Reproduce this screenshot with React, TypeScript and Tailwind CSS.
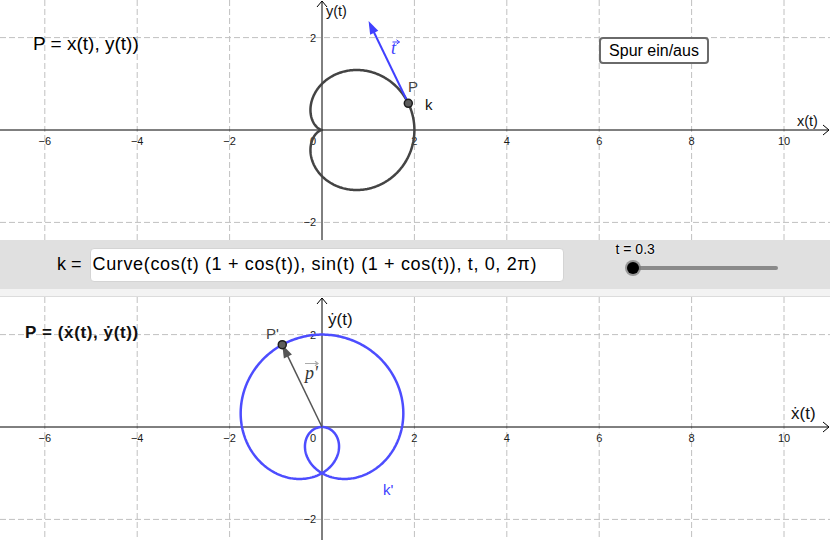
import React from 'react';

const SCALE = 46.2;
const OX = 322;
const OY = 130;
const T0 = 0.3;

const sx = (x: number) => OX + x * SCALE;
const sy = (y: number) => OY - y * SCALE;

const FONT = '"Liberation Sans", Arial, sans-serif';
const SERIF = '"Liberation Serif", "Times New Roman", serif';

type Fn = (t: number) => [number, number];

const k: Fn = (t) => [Math.cos(t) * (1 + Math.cos(t)), Math.sin(t) * (1 + Math.cos(t))];
const kd: Fn = (t) => [-Math.sin(t) - Math.sin(2 * t), Math.cos(t) + Math.cos(2 * t)];

function curvePath(fn: Fn) {
  let d = '';
  const n = 480;
  for (let i = 0; i <= n; i++) {
    const [x, y] = fn((2 * Math.PI * i) / n);
    d += (i === 0 ? 'M' : 'L') + sx(x).toFixed(2) + ' ' + sy(y).toFixed(2) + ' ';
  }
  return d;
}

// line with a filled arrow head at (x2, y2)
function Vector({ x1, y1, x2, y2, color, width }: { x1: number; y1: number; x2: number; y2: number; color: string; width: number }) {
  const len = Math.hypot(x2 - x1, y2 - y1);
  const ux = (x2 - x1) / len;
  const uy = (y2 - y1) / len;
  const hl = 13;
  const hw = 4.5;
  const bx = x2 - ux * hl;
  const by = y2 - uy * hl;
  const pts = `${x2},${y2} ${bx - uy * hw},${by + ux * hw} ${bx + uy * hw},${by - ux * hw}`;
  return (
    <g>
      <line x1={x1} y1={y1} x2={bx + ux * 2} y2={by + uy * 2} stroke={color} strokeWidth={width} />
      <polygon points={pts} fill={color} />
    </g>
  );
}

function Grid({ height }: { height: number }) {
  const xs = [-6, -4, -2, 2, 4, 6, 8, 10];
  return (
    <g>
      {xs.map((v) => (
        <line key={v} x1={sx(v)} y1={0} x2={sx(v)} y2={height} stroke="#c0c0c0" strokeDasharray="6 3" />
      ))}
      {[2, -2].map((v) => (
        <line key={v} x1={0} y1={sy(v)} x2={830} y2={sy(v)} stroke="#c0c0c0" strokeDasharray="6 3" />
      ))}
      <line x1={0} y1={OY} x2={829} y2={OY} stroke="#000" strokeWidth={1} />
      <line x1={OX} y1={1} x2={OX} y2={height} stroke="#000" strokeWidth={1} />
      <path d={`M823 ${OY - 5} L829 ${OY} L823 ${OY + 5}`} fill="none" stroke="#000" />
      <path d={`M${OX - 5} 7 L${OX} 1 L${OX + 5} 7`} fill="none" stroke="#000" />
      <g fontFamily={FONT} fontSize={11} fill="#1a1a1a">
        {xs.map((v) => (
          <text key={v} x={sx(v)} y={OY + 15} textAnchor="middle">
            {v < 0 ? '\u2212' + -v : v}
          </text>
        ))}
        <text x={OX - 9} y={OY + 15} textAnchor="middle">0</text>
        <text x={OX - 6} y={sy(2) + 4} textAnchor="end">2</text>
        <text x={OX - 6} y={sy(-2) + 4} textAnchor="end">{'\u22122'}</text>
      </g>
    </g>
  );
}

function TopGraph() {
  const [px, py] = k(T0);
  const [dx, dy] = kd(T0);
  const P = { x: sx(px), y: sy(py) };
  return (
    <div className="relative h-[240px] shrink-0">
      <svg width={830} height={240} className="block">
        <Grid height={240} />
        <path d={curvePath(k)} fill="none" stroke="#444" strokeWidth={2.5} />
        <Vector x1={P.x} y1={P.y} x2={sx(px + dx)} y2={sy(py + dy)} color="#4040ff" width={2} />
        <circle cx={P.x} cy={P.y} r={4} fill="#5c5c5c" stroke="#1c1c1c" strokeWidth={1.5} />
        <g fontFamily={FONT}>
          <text x={326} y={16} fontSize={14.5} fill="#111">y(t)</text>
          <text x={797} y={126} fontSize={14.5} fill="#111">x(t)</text>
          <text x={408} y={92} fontSize={15} fill="#444">P</text>
          <text x={425} y={110} fontSize={15} fill="#111">k</text>
        </g>
        <text x={391} y={54} fontFamily={SERIF} fontStyle="italic" fontSize={18} fill="#4040ff">t</text>
        <path d="M392.5 42 L399.5 42 M396.5 39.8 L399.5 42 L396.5 44.2" fill="none" stroke="#4040ff" strokeWidth={1} />
      </svg>
      <div className="absolute left-[33px] top-[30px] text-[19px] text-black [font-family:'Liberation_Sans',Arial,sans-serif]">
        P = x(t), y(t))
      </div>
      <button className="absolute left-[599px] top-[37px] h-[27px] w-[110px] rounded-[4px] border-2 border-[#6a6a6a] bg-white text-[16px] leading-none text-black [font-family:'Liberation_Sans',Arial,sans-serif]">
        Spur ein/aus
      </button>
    </div>
  );
}

function BottomGraph() {
  const [qx, qy] = kd(T0);
  const Q = { x: sx(qx), y: sy(qy) };
  return (
    <div className="relative flex-1">
      <svg width={830} height={243} className="block">
        <Grid height={243} />
        <path d={curvePath(kd)} fill="none" stroke="#4d4dff" strokeWidth={2.5} />
        <Vector x1={OX} y1={OY} x2={Q.x} y2={Q.y} color="#555" width={1.5} />
        <circle cx={Q.x} cy={Q.y} r={4} fill="#5c5c5c" stroke="#1c1c1c" strokeWidth={1.5} />
        <g fontFamily={FONT}>
          <text x={328} y={28} fontSize={17} fill="#111">{'\u1E8F(t)'}</text>
          <text x={791} y={122} fontSize={17} fill="#111">{'\u1E8B(t)'}</text>
          <text x={266} y={42} fontSize={15} fill="#444">P'</text>
          <text x={383} y={198} fontSize={15} fill="#4040ff">k'</text>
        </g>
        <text x={305} y={82} fontFamily={SERIF} fontStyle="italic" fontSize={18} fill="#333">p'</text>
        <path d="M305 66.5 L318 66.5 M315 64.3 L318 66.5 L315 68.7" fill="none" stroke="#aaa" strokeWidth={1.2} />
      </svg>
      <div className="absolute left-[25px] top-[23px] text-[17px] font-bold tracking-[0.6px] text-[#111] [font-family:'Liberation_Sans',Arial,sans-serif]">
        P = ({'\u1E8B'}(t), {'\u1E8F'}(t))
      </div>
    </div>
  );
}

function InputBar() {
  return (
    <div className="flex h-[49px] shrink-0 items-center bg-[#e0e0e0] [font-family:'Liberation_Sans',Arial,sans-serif]">
      <span className="ml-[57px] text-[18px] text-black">k =</span>
      <div className="ml-[8px] flex h-[34px] w-[474px] items-center rounded-[4px] border border-[#d4d4d4] bg-white pl-[2px] text-[18px] tracking-[0.65px] text-black">
        Curve(cos(t) (1 + cos(t)), sin(t) (1 + cos(t)), t, 0, 2π)
      </div>
      <div className="ml-[52px] flex flex-col self-stretch pt-[3px]">
        <span className="text-[14px] leading-[13px] text-black [text-shadow:0_0_2px_#fff,0_0_2px_#fff]">t = 0.3</span>
        <div className="relative ml-[17px] mt-[10px] h-[4px] w-[145px] rounded-full bg-[#8a8a8a]">
          <div className="absolute left-[-8px] top-[-6px] h-[16px] w-[16px] rounded-full bg-[#777]/70 p-[2px]">
            <div className="h-full w-full rounded-full bg-black" />
          </div>
        </div>
      </div>
    </div>
  );
}

export default function App() {
  return (
    <div className="flex h-[540px] w-[830px] flex-col overflow-hidden bg-white">
      <TopGraph />
      <InputBar />
      <div className="h-[8px] shrink-0 border-b border-[#dcdcdc] bg-[#f3f3f3]" />
      <BottomGraph />
    </div>
  );
}
